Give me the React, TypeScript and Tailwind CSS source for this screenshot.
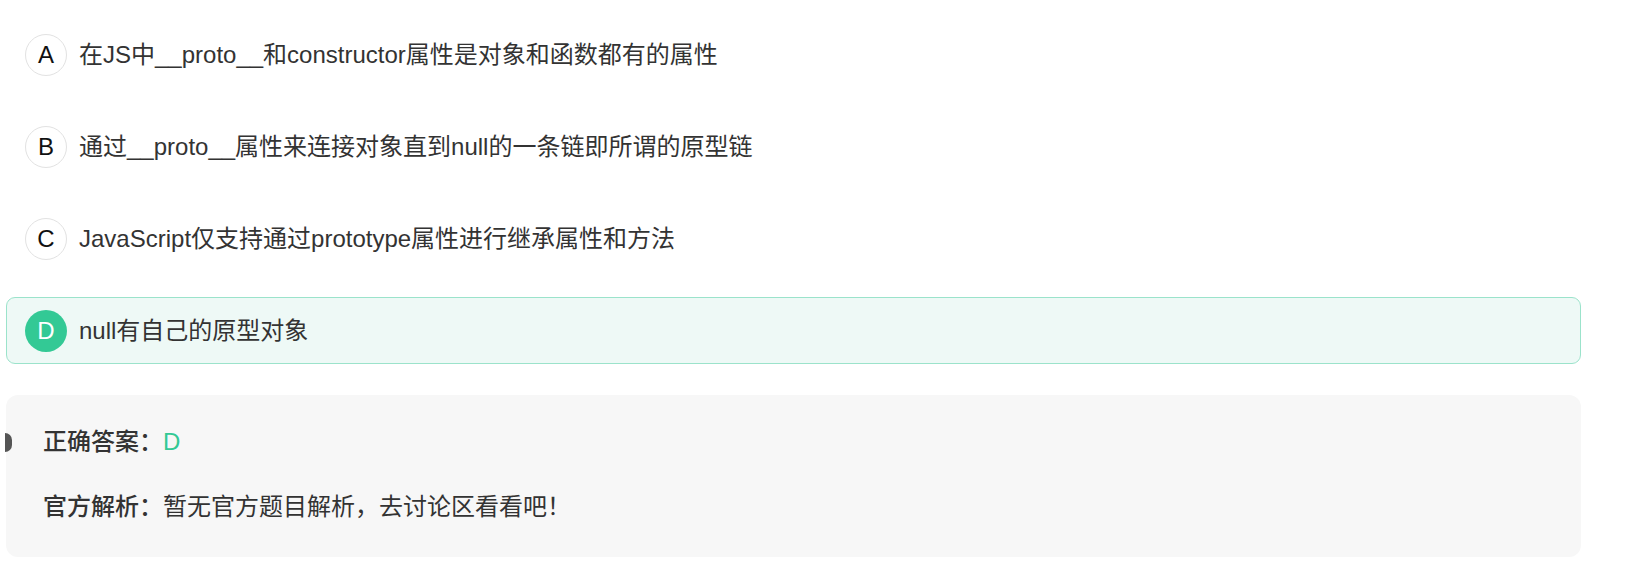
const options = [
  { key: 'A', text: '在JS中__proto__和constructor属性是对象和函数都有的属性' },
  { key: 'B', text: '通过__proto__属性来连接对象直到null的一条链即所谓的原型链' },
  { key: 'C', text: 'JavaScript仅支持通过prototype属性进行继承属性和方法' },
  { key: 'D', text: 'null有自己的原型对象' },
];

const answer = 'D';

function OptionRow({ letter, text, selected }: { letter: string; text: string; selected: boolean }) {
  return (
    <div
      className={
        selected
          ? 'flex items-center h-[67px] pl-[18px] rounded-[9px] border border-[#9be3cb] bg-[#eef9f6]'
          : 'flex items-center h-[67px] pl-[18px] border border-transparent'
      }
    >
      <div
        className={
          selected
            ? 'flex items-center justify-center w-[42px] h-[42px] rounded-full bg-[#33c995] text-white text-[24px]'
            : 'flex items-center justify-center w-[42px] h-[42px] rounded-full border border-[#e2e2e2] bg-white text-[#111] text-[24px]'
        }
      >
        {letter}
      </div>
      <span className="ml-[12px] text-[24px] text-[#333]">{text}</span>
    </div>
  );
}

export default function App() {
  return (
    <div
      className="bg-white w-[1639px] h-[576px] pl-[6px] pt-[21px]"
      style={{ fontFamily: '"Liberation Sans", "Noto Sans CJK SC", sans-serif' }}
    >
      <div className="w-[1575px] flex flex-col gap-[25px]">
        {options.map((o) => (
          <OptionRow key={o.key} letter={o.key} text={o.text} selected={o.key === answer} />
        ))}
      </div>

      <div className="relative w-[1575px] mt-[31px] rounded-[12px] bg-[#f7f7f7] pl-[37px] pt-[29px] pb-[32px] text-[24px] text-[#333]">
        <div className="absolute left-[-1px] top-[38px] w-[7px] h-[19px] rounded-r-full bg-[#555]" />
        <div className="h-[36px] flex items-center">
          <span className="font-medium">正确答案：</span>
          <span className="text-[#33c995]">{answer}</span>
        </div>
        <div className="h-[36px] mt-[29px] flex items-center">
          <span className="font-medium">官方解析：</span>
          <span>暂无官方题目解析，去讨论区看看吧！</span>
        </div>
      </div>
    </div>
  );
}
